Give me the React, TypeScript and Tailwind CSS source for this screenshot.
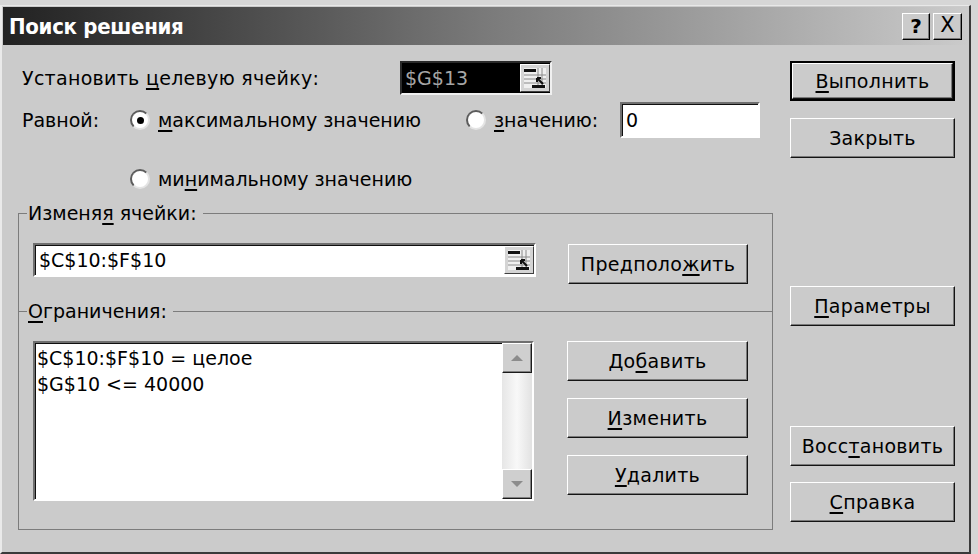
import type { ReactNode } from 'react'

const font = { fontFamily: '"DejaVu Sans", "Liberation Sans", sans-serif' }

const U = ({ children }: { children: ReactNode }) => (
  <span className="underline decoration-2 underline-offset-[3px]">{children}</span>
)

const Button = ({ children, isDefault = false, className = '' }: { children: ReactNode; isDefault?: boolean; className?: string }) => (
  <div className={`h-[40px] flex ${isDefault ? 'border-2 border-black' : ''} ${className}`}>
    <div className="flex-1 flex items-center justify-center bg-[#cbcbcb] border border-t-white border-l-white border-r-[#141414] border-b-[#141414] shadow-[inset_-1px_-1px_0_#7a7a7a] text-[19px] tracking-[0.3px] text-black">
      {children}
    </div>
  </div>
)

const Radio = ({ checked = false }: { checked?: boolean }) => (
  <span className="w-[20px] h-[20px] shrink-0 rounded-full bg-white border-2 border-t-[#5c5c5c] border-l-[#5c5c5c] border-r-[#e4e4e4] border-b-[#e4e4e4] flex items-center justify-center">
    {checked && <span className="w-[7px] h-[7px] rounded-full bg-black" />}
  </span>
)

const RefIcon = () => (
  <span className="w-[30px] h-[28px] shrink-0 flex items-center justify-center bg-[#d4d4d4] border border-t-white border-l-white border-r-[#404040] border-b-[#404040]">
    <svg width="24" height="22" viewBox="0 0 24 22">
      <rect x="1" y="1" width="22" height="20" fill="#efefef" />
      <path d="M1 8H23M1 12H23M1 16H23M15 1V21M19 1V21" stroke="#8a8a8a" strokeWidth="1" />
      <rect x="1" y="2" width="12" height="3" fill="#111" />
      <path d="M20 17L14 11M14 11V15M14 11H18" stroke="#111" strokeWidth="2" fill="none" />
      <rect x="9" y="18" width="13" height="3" fill="#111" />
    </svg>
  </span>
)

const Sunken = ({ children, className = '' }: { children: ReactNode; className?: string }) => (
  <div className={`border-2 border-t-[#6f6f6f] border-l-[#6f6f6f] border-r-white border-b-white shadow-[inset_1px_1px_0_#101010] ${className}`}>
    {children}
  </div>
)

const ScrollBtn = ({ up }: { up: boolean }) => (
  <div className="w-[30px] h-[30px] flex items-center justify-center bg-[#cfcfcf] border border-t-white border-l-white border-r-[#1a1a1a] border-b-[#1a1a1a] shadow-[inset_-1px_-1px_0_#808080]">
    <svg width="14" height="8" viewBox="0 0 14 8">
      {up ? <path d="M1 7L7 1L13 7Z" fill="#8c8c8c" /> : <path d="M1 1L7 7L13 1Z" fill="#8c8c8c" />}
    </svg>
  </div>
)

export default function App() {
  return (
    <div className="w-[978px] h-[554px] bg-[#d6d6d6] overflow-hidden text-black" style={font}>
      <div className="mt-[5px] w-[971px] h-[549px] bg-[#cbcbcb] border-t border-t-[#e8e8e8] border-l-2 border-l-[#eaeaea] border-r-2 border-r-[#3a3a3a] border-b-2 border-b-[#3a3a3a] flex flex-col">
        {/* title bar */}
        <div className="mx-[1px] mt-[1px] h-[38px] flex items-center justify-between bg-gradient-to-r from-[#222222] via-[#7a7a7a] to-[#cbcbcb] pl-[6px] pr-[6px]">
          <span className="text-white font-bold text-[22px] tracking-[-0.3px]" style={{ fontFamily: '"DejaVu Sans Condensed", "DejaVu Sans", sans-serif' }}>
            Поиск решения
          </span>
          <div className="flex gap-[3px]">
            <div className="w-[28px] h-[27px] flex items-center justify-center bg-[#cbcbcb] border border-t-white border-l-white border-r-black border-b-black shadow-[inset_-1px_-1px_0_#7a7a7a] font-bold text-[20px]">?</div>
            <div className="w-[29px] h-[27px] flex items-center justify-center bg-[#cbcbcb] border border-t-white border-l-white border-r-black border-b-black shadow-[inset_-1px_-1px_0_#7a7a7a] text-[21px]">X</div>
          </div>
        </div>

        {/* body */}
        <div className="flex text-[19px]">
          <div className="w-[770px] pl-[16px] shrink-0 flex flex-col">
            {/* target cell */}
            <div className="mt-[16px] h-[34px] flex items-center pl-[4px]">
              <span className="w-[378px] tracking-[0.3px]">Установить <U>ц</U>елевую ячейку:</span>
              <div className="w-[152px] h-[34px] bg-black flex items-center justify-between border-2 border-t-[#2a2a2a] border-l-[#2a2a2a] border-r-[#f0f0f0] border-b-[#f0f0f0]">
                <span className="pl-[3px] text-[#a6a6a6]">$G$13</span>
                <RefIcon />
              </div>
            </div>

            {/* equal to */}
            <div className="mt-[7px] h-[36px] flex items-center pl-[4px]">
              <span className="w-[108px]">Равной:</span>
              <label className="w-[336px] flex items-center gap-[8px]">
                <Radio checked />
                <span><U>м</U>аксимальному значению</span>
              </label>
              <label className="w-[154px] flex items-center gap-[8px]">
                <Radio />
                <span><U>з</U>начению:</span>
              </label>
              <Sunken className="w-[140px] h-[36px] bg-white flex items-center pl-[4px]">0</Sunken>
            </div>

            <div className="mt-[28px] h-[26px] flex items-center pl-[112px]">
              <label className="flex items-center gap-[8px]">
                <Radio />
                <span>ми<U>н</U>имальному значению</span>
              </label>
            </div>

            {/* changing cells */}
            <fieldset className="mt-[9px] w-[755px] border border-[#7c7c7c] border-b-0 pl-[14px] pr-[24px] pt-[18px] pb-[27px]">
              <legend className="h-[24px] leading-[24px] pl-[1px] pr-[6px] -ml-[6px]">Изменя<U>я</U> ячейки:</legend>
              <div className="flex items-start justify-between">
                <Sunken className="w-[503px] h-[34px] bg-white flex items-center justify-between">
                  <span className="pl-[4px]">$C$10:$F$10</span>
                  <RefIcon />
                </Sunken>
                <Button className="mt-[1px] w-[180px]">Предполо<U>ж</U>ить</Button>
              </div>
            </fieldset>

            {/* constraints */}
            <fieldset className="-mt-[12px] w-[755px] border border-[#7c7c7c] pl-[14px] pr-[24px] pt-[18px] pb-[28px]">
              <legend className="h-[24px] leading-[24px] pl-[1px] pr-[6px] -ml-[6px]"><U>О</U>граничения:</legend>
              <div className="flex items-start justify-between">
                <Sunken className="w-[501px] h-[160px] bg-white flex">
                  <div className="flex-1 pt-[2px] pl-[2px] leading-[26px]">
                    <div>$C$10:$F$10 = целое</div>
                    <div>$G$10 &lt;= 40000</div>
                  </div>
                  <div className="w-[30px] flex flex-col justify-between bg-gradient-to-r from-[#e6e6e6] via-[#f8f8f8] to-[#e2e2e2]">
                    <ScrollBtn up />
                    <ScrollBtn up={false} />
                  </div>
                </Sunken>
                <div className="w-[181px] flex flex-col gap-[17px]">
                  <Button>До<U>б</U>авить</Button>
                  <Button><U>И</U>зменить</Button>
                  <Button><U>У</U>далить</Button>
                </div>
              </div>
            </fieldset>
          </div>

          <div className="ml-[18px] w-[165px] shrink-0 flex flex-col pt-[16px]">
            <Button isDefault><U>В</U>ыполнить</Button>
            <Button className="mt-[17px]">Закрыть</Button>
            <Button className="mt-[128px]"><U>П</U>араметры</Button>
            <Button className="mt-[100px]">Восс<U>т</U>ановить</Button>
            <Button className="mt-[16px]"><U>С</U>правка</Button>
          </div>
        </div>
      </div>
    </div>
  )
}
